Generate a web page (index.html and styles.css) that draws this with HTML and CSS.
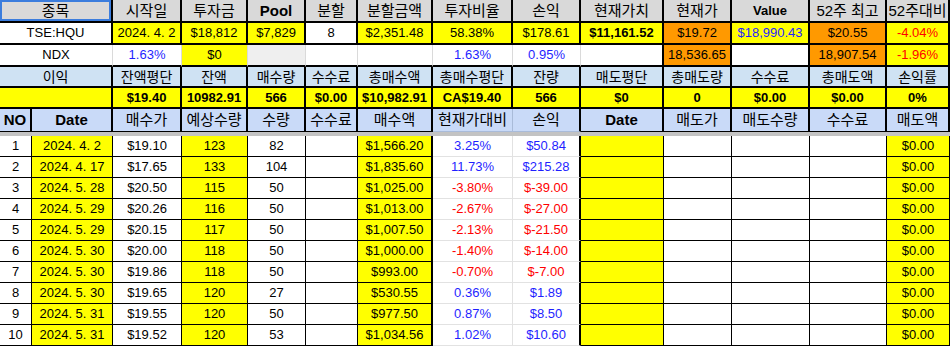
FILE: index.html
```html
<!DOCTYPE html>
<html lang="ko">
<head>
<meta charset="utf-8">
<link rel="stylesheet" href="styles.css">
</head>
<body>
<table class="sheet">
<colgroup>
<col class="c32"><col class="c81"><col class="c69"><col class="c66"><col class="c58"><col class="c52"><col class="c75"><col class="c80"><col class="c68"><col class="c83"><col class="c68"><col class="c78"><col class="c77"><col class="c63">
</colgroup>
<tr class="r1">
<td colspan="2" class="h sel">종목</td><td class="h">시작일</td><td class="h">투자금</td><td class="h b">Pool</td><td class="h">분할</td><td class="h">분할금액</td><td class="h">투자비율</td><td class="h">손익</td><td class="h">현재가치</td><td class="h">현재가</td><td class="h b sm">Value</td><td class="h">52주 최고</td><td class="h">52주대비</td>
</tr>
<tr class="r2">
<td colspan="2">TSE:HQU</td><td class="y">2024. 4. 2</td><td class="y">$18,812</td><td class="y">$7,829</td><td>8</td><td class="y">$2,351.48</td><td class="y">58.38%</td><td class="y">$178.61</td><td class="y b">$11,161.52</td><td class="o">$19.72</td><td class="y blue">$18,990.43</td><td class="o">$20.55</td><td class="y red">-4.04%</td>
</tr>
<tr class="r3">
<td colspan="2">NDX</td><td class="blue">1.63%</td><td class="y">$0</td><td class="g"></td><td></td><td></td><td class="blue">1.63%</td><td class="blue">0.95%</td><td class="dk"></td><td class="o dk">18,536.65</td><td class="dk"></td><td class="o dk">18,907.54</td><td class="y red dk">-1.96%</td>
</tr>
<tr class="r4">
<td colspan="2" class="lb">이익</td><td class="lb">잔액평단</td><td class="lb">잔액</td><td class="lb">매수량</td><td class="lb">수수료</td><td class="lb">총매수액</td><td class="lb">총매수평단</td><td class="lb">잔량</td><td class="lb">매도평단</td><td class="lb">총매도량</td><td class="lb">수수료</td><td class="lb">총매도액</td><td class="lb">손익률</td>
</tr>
<tr class="r5">
<td colspan="2" class="y"></td><td class="y b">$19.40</td><td class="y b">10982.91</td><td class="y b">566</td><td class="y b">$0.00</td><td class="y b">$10,982.91</td><td class="y b">CA$19.40</td><td class="y b">566</td><td class="y b">$0</td><td class="y b">0</td><td class="y b">$0.00</td><td class="y b">$0.00</td><td class="y b">0%</td>
</tr>
<tr class="r6">
<td class="hb b">NO</td><td class="hb b">Date</td><td class="hb">매수가</td><td class="hb">예상수량</td><td class="hb">수량</td><td class="hb">수수료</td><td class="hb thick">매수액</td><td class="hb soft">현재가대비</td><td class="hb thick">손익</td><td class="hb b">Date</td><td class="hb">매도가</td><td class="hb">매도수량</td><td class="hb">수수료</td><td class="hb">매도액</td>
</tr>
<tr class="band"><td colspan="14"></td></tr>
<tr class="d">
<td>1</td><td class="y">2024. 4. 2</td><td>$19.10</td><td class="y">123</td><td>82</td><td></td><td class="y thick">$1,566.20</td><td class="soft blue">3.25%</td><td class="soft thick blue">$50.84</td><td class="y"></td><td></td><td></td><td></td><td class="y">$0.00</td>
</tr>
<tr class="d">
<td>2</td><td class="y">2024. 4. 17</td><td>$17.65</td><td class="y">133</td><td>104</td><td></td><td class="y thick">$1,835.60</td><td class="soft blue">11.73%</td><td class="soft thick blue">$215.28</td><td class="y"></td><td></td><td></td><td></td><td class="y">$0.00</td>
</tr>
<tr class="d">
<td>3</td><td class="y">2024. 5. 28</td><td>$20.50</td><td class="y">115</td><td>50</td><td></td><td class="y thick">$1,025.00</td><td class="soft red">-3.80%</td><td class="soft thick red">$-39.00</td><td class="y"></td><td></td><td></td><td></td><td class="y">$0.00</td>
</tr>
<tr class="d">
<td>4</td><td class="y">2024. 5. 29</td><td>$20.26</td><td class="y">116</td><td>50</td><td></td><td class="y thick">$1,013.00</td><td class="soft red">-2.67%</td><td class="soft thick red">$-27.00</td><td class="y"></td><td></td><td></td><td></td><td class="y">$0.00</td>
</tr>
<tr class="d">
<td>5</td><td class="y">2024. 5. 29</td><td>$20.15</td><td class="y">117</td><td>50</td><td></td><td class="y thick">$1,007.50</td><td class="soft red">-2.13%</td><td class="soft thick red">$-21.50</td><td class="y"></td><td></td><td></td><td></td><td class="y">$0.00</td>
</tr>
<tr class="d">
<td>6</td><td class="y">2024. 5. 30</td><td>$20.00</td><td class="y">118</td><td>50</td><td></td><td class="y thick">$1,000.00</td><td class="soft red">-1.40%</td><td class="soft thick red">$-14.00</td><td class="y"></td><td></td><td></td><td></td><td class="y">$0.00</td>
</tr>
<tr class="d">
<td>7</td><td class="y">2024. 5. 30</td><td>$19.86</td><td class="y">118</td><td>50</td><td></td><td class="y thick">$993.00</td><td class="soft red">-0.70%</td><td class="soft thick red">$-7.00</td><td class="y"></td><td></td><td></td><td></td><td class="y">$0.00</td>
</tr>
<tr class="d">
<td>8</td><td class="y">2024. 5. 30</td><td>$19.65</td><td class="y">120</td><td>27</td><td></td><td class="y thick">$530.55</td><td class="soft blue">0.36%</td><td class="soft thick blue">$1.89</td><td class="y"></td><td></td><td></td><td></td><td class="y">$0.00</td>
</tr>
<tr class="d">
<td>9</td><td class="y">2024. 5. 31</td><td>$19.55</td><td class="y">120</td><td>50</td><td></td><td class="y thick">$977.50</td><td class="soft blue">0.87%</td><td class="soft thick blue">$8.50</td><td class="y"></td><td></td><td></td><td></td><td class="y">$0.00</td>
</tr>
<tr class="d">
<td>10</td><td class="y">2024. 5. 31</td><td>$19.52</td><td class="y">120</td><td>53</td><td></td><td class="y thick">$1,034.56</td><td class="soft blue">1.02%</td><td class="soft thick blue">$10.60</td><td class="y"></td><td></td><td></td><td></td><td class="y">$0.00</td>
</tr>
</table>
</body>
</html>
```
FILE: styles.css
```css
html, body {
  margin: 0;
  padding: 0;
  background: #ffffff;
}
.sheet {
  border-collapse: separate;
  border-spacing: 0;
  table-layout: fixed;
  width: 950px;
  font-family: "Liberation Sans", "Noto Sans CJK KR", Arial, sans-serif;
  font-size: 13px;
  color: #000000;
}
.c32 { width: 32px; }
.c81 { width: 81px; }
.c69 { width: 69px; }
.c66 { width: 66px; }
.c58 { width: 58px; }
.c52 { width: 52px; }
.c75 { width: 75px; }
.c80 { width: 80px; }
.c68 { width: 68px; }
.c83 { width: 83px; }
.c78 { width: 78px; }
.c77 { width: 77px; }
.c63 { width: 63px; }
.sheet td {
  box-sizing: border-box;
  padding: 0;
  text-align: center;
  vertical-align: middle;
  line-height: 16px;
  white-space: nowrap;
  overflow: hidden;
  border-right: 2px solid #000000;
  border-bottom: 2px solid #000000;
  background: #ffffff;
}
.r1 td { height: 23px; font-size: 15px; }
.r2 td { height: 22px; }
.r3 td { height: 22px; border-right: 1px solid #dadada; }
.r3 td.dk { border-right: 2px solid #000000; }
.r3 td:nth-child(9) { border-right: 2px solid #000000; }
.r4 td { height: 21px; font-size: 14px; }
.r5 td { height: 21px; }
.r6 td { height: 23px; font-size: 15px; border-bottom: 1px solid #000000; }
.r6 td.soft { border-right: 1px solid #a9bbd9; border-bottom-color: #a9bbd9; }
.r6 td:nth-child(9) { border-bottom-color: #a9bbd9; }
.band td {
  height: 4px;
  line-height: 0;
  font-size: 0;
  border: none;
  background: #c3c3c3;
}
.d td {
  height: 21px;
  border-right: 1px solid #000000;
  border-bottom: 1px solid #000000;
}
.d td.soft {
  border-right: 1px solid #e2e2e2;
  border-bottom: 1px solid #e2e2e2;
}
.sheet td.thick { border-right: 2px solid #000000; }
.h { background: #d9d9d9 !important; }
.sel { box-shadow: inset 0 0 0 2px #3b7ddd; }
.y { background: #ffff00 !important; }
.o { background: #ff9900 !important; }
.g { background: #efefef !important; }
.lb { background: #cfe2f3 !important; }
.hb { background: #c9daf8 !important; }
.b { font-weight: bold; }
.r1 .sm { font-size: 13px; }
.blue { color: #1f1fff; }
.red { color: #ff0000; }
```
